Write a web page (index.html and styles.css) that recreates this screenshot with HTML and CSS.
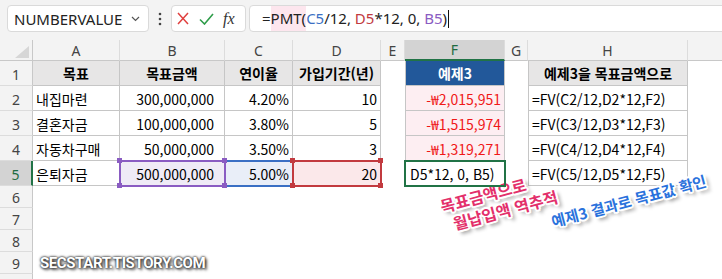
FILE: index.html
```html
<!DOCTYPE html>
<html lang="ko">
<head>
    <meta charset="UTF-8">
    <title>PMT 역추적</title>
    <link rel="stylesheet" href="styles.css">
</head>
<body>
<div class="app">
    <!-- 이름 상자 + 수식 입력줄 -->
    <div class="toolbar">
        <div class="namebox">
            <span>NUMBERVALUE</span>
            <svg width="9" height="6" viewBox="0 0 9 6"><path d="M1 1l3.5 3.5L8 1" fill="none" stroke="#555" stroke-width="1.2"/></svg>
        </div>
        <div class="dots">
            <svg width="4" height="14" viewBox="0 0 4 14"><circle cx="2" cy="2" r="1.3" fill="#444"/><circle cx="2" cy="7" r="1.3" fill="#444"/><circle cx="2" cy="12" r="1.3" fill="#444"/></svg>
        </div>
        <div class="fxbox">
            <svg class="ico-x" width="12" height="13" viewBox="0 0 12 13"><path d="M1 1l10 11M11 1L1 12" stroke="#e0403f" stroke-width="1.5" fill="none"/></svg>
            <svg class="ico-ok" width="15" height="12" viewBox="0 0 15 12"><path d="M1 6.5l4.5 4.5L14 1" stroke="#2f9d4a" stroke-width="1.6" fill="none"/></svg>
            <span class="fx">fx</span>
        </div>
        <div class="formula">=<span class="fn">PMT(</span><span class="t-blue">C5</span>/12, <span class="t-red">D5</span>*12, 0, <span class="t-purple">B5</span>)<span class="caret"></span></div>
    </div>

    <div class="sheet">
        <div class="corner">
            <svg width="14" height="12" viewBox="0 0 14 12"><polygon points="14,0 14,12 0,12" fill="#d6d6d6"/></svg>
        </div>
        <div class="ch">A</div>
        <div class="ch">B</div>
        <div class="ch">C</div>
        <div class="ch">D</div>
        <div class="ch">E</div>
        <div class="ch sel">F</div>
        <div class="ch">G</div>
        <div class="ch">H</div>
        <div class="ch last"></div>

        <div class="rh">1</div>
        <div class="c hd">목표</div>
        <div class="c hd">목표금액</div>
        <div class="c hd">연이율</div>
        <div class="c hd">가입기간(년)</div>
        <div class="blank"></div>
        <div class="c hd f-col f-head">예제3</div>
        <div class="blank"></div>
        <div class="c hd h-col">예제3을 목표금액으로</div>
        <div class="blank"></div>

        <div class="rh">2</div>
        <div class="c">내집마련</div>
        <div class="c num amt">300,000,000</div>
        <div class="c num">4.20%</div>
        <div class="c num">10</div>
        <div class="blank"></div>
        <div class="c num f-col pay">-₩2,015,951</div>
        <div class="blank"></div>
        <div class="c h-col">=FV(C2/12,D2*12,F2)</div>
        <div class="blank"></div>

        <div class="rh">3</div>
        <div class="c">결혼자금</div>
        <div class="c num amt">100,000,000</div>
        <div class="c num">3.80%</div>
        <div class="c num">5</div>
        <div class="blank"></div>
        <div class="c num f-col pay">-₩1,515,974</div>
        <div class="blank"></div>
        <div class="c h-col">=FV(C3/12,D3*12,F3)</div>
        <div class="blank"></div>

        <div class="rh">4</div>
        <div class="c">자동차구매</div>
        <div class="c num amt">50,000,000</div>
        <div class="c num">3.50%</div>
        <div class="c num">3</div>
        <div class="blank"></div>
        <div class="c num f-col pay">-₩1,319,271</div>
        <div class="blank"></div>
        <div class="c h-col">=FV(C4/12,D4*12,F4)</div>
        <div class="blank"></div>

        <div class="rh sel">5</div>
        <div class="c">은퇴자금</div>
        <div class="c num amt ref ref-p">500,000,000<i class="hd-tl"></i><i class="hd-tr"></i><i class="hd-bl"></i><i class="hd-br"></i></div>
        <div class="c num ref ref-b">5.00%</div>
        <div class="c num ref ref-r">20<i class="hd-tl"></i><i class="hd-tr"></i><i class="hd-bl"></i><i class="hd-br"></i></div>
        <div class="blank"></div>
        <div class="c f-col active">D5*12, 0, B5)</div>
        <div class="blank"></div>
        <div class="c h-col">=FV(C5/12,D5*12,F5)</div>
        <div class="blank"></div>

        <div class="rh">6</div><div class="rest"></div>
        <div class="rh">7</div><div class="rest"></div>
        <div class="rh">8</div><div class="rest"></div>
        <div class="rh">9</div><div class="rest"></div>
        <div class="rh"></div><div class="rest"></div>
    </div>

    <!-- 설명 스티커 -->
    <div class="note note-pink">목표금액으로<br><span class="indent">월납입액 역추적</span></div>
    <div class="note note-blue">예제3 결과로 목표값 확인</div>
    <div class="mark">SECSTART.TISTORY.COM</div>
</div>
</body>
</html>
```

FILE: styles.css
```css
body {
    margin: 0;
    font-family: "Noto Sans CJK KR", sans-serif;
}

.app {
    position: relative;
    width: 722px;
    height: 279px;
    overflow: hidden;
    background: #fff;
}

/* 상단 도구줄 */
.toolbar {
    height: 40px;
    box-sizing: border-box;
    padding: 5px 0 0 7px;
    background: #f3f3f3;
    display: flex;
    align-items: flex-start;
}

.namebox {
    width: 142px;
    height: 27px;
    box-sizing: border-box;
    padding: 0 8px 0 6px;
    background: #fff;
    border: 1px solid #dadada;
    border-radius: 4px;
    display: flex;
    align-items: center;
    justify-content: space-between;
    font: 15px "Noto Sans", sans-serif;
    color: #222;
}

.dots {
    width: 22px;
    height: 27px;
    display: flex;
    align-items: center;
    justify-content: center;
}

.fxbox {
    width: 75px;
    height: 27px;
    box-sizing: border-box;
    padding-left: 5px;
    background: #fff;
    border: 1px solid #dadada;
    border-radius: 4px;
    display: flex;
    align-items: center;
}

.ico-ok {
    margin-left: 10px;
}

.fx {
    margin-left: 9px;
    font: italic 16px "Liberation Serif", serif;
    color: #333;
}

.formula {
    flex: 1;
    height: 27px;
    margin-left: 3px;
    margin-right: -10px;
    box-sizing: border-box;
    padding-left: 12px;
    background: #fff;
    border: 1px solid #dadada;
    border-radius: 4px;
    font: 15px/25px "Noto Sans", sans-serif;
    color: #222;
    white-space: nowrap;
}

.fn {
    display: inline-block;
    background: #fde6ee;
}

.t-blue { color: #3a6fc4; }
.t-red { color: #c23a3f; }
.t-purple { color: #8a5cc2; }

.caret {
    display: inline-block;
    width: 1px;
    height: 18px;
    margin-left: 1px;
    vertical-align: -4px;
    background: #111;
}

/* 시트 */
.sheet {
    display: grid;
    grid-template-columns: 33px 87px 105px 68px 88px 24px 100px 23px 160px 1fr;
    grid-template-rows: 21px repeat(5, 25px) repeat(5, 22px);
    font-size: 14px;
}

.corner {
    background: #f3f3f3;
    border-right: 1px solid #c8c8c8;
    border-bottom: 1px solid #c8c8c8;
    display: flex;
    align-items: flex-end;
    justify-content: flex-end;
    padding: 0 3px 2px 0;
}

.ch {
    background: #f3f3f3;
    border-right: 1px solid #dcdcdc;
    border-bottom: 1px solid #c8c8c8;
    display: flex;
    align-items: center;
    justify-content: center;
    font: 14px "Noto Sans", sans-serif;
    color: #444;
}

.ch.last {
    border-right: none;
}

.ch.sel {
    background: #d3d3d3;
    color: #1e6b41;
    border-bottom: 2px solid #217346;
}

.rh {
    background: #f3f3f3;
    border-right: 1px solid #c8c8c8;
    border-bottom: 1px solid #dcdcdc;
    display: flex;
    align-items: center;
    justify-content: center;
    padding-top: 2px;
    font: 14px "Noto Sans", sans-serif;
    color: #444;
}

.rh.sel {
    background: #d3d3d3;
    color: #1e6b41;
    border-right: 2px solid #217346;
}

.c {
    border-right: 1px solid #c6c6c6;
    border-bottom: 1px solid #c6c6c6;
    padding: 2px 3px 0;
    display: flex;
    align-items: center;
    white-space: nowrap;
    overflow: hidden;
    color: #000;
}

.c.hd {
    justify-content: center;
    padding-top: 0;
    background: #e7e6e6;
    font-weight: bold;
}

.c.num {
    justify-content: flex-end;
}

.c.amt {
    padding-right: 10px;
}

.f-col,
.h-col {
    border-left: 1px solid #c6c6c6;
}

.c.f-head {
    background: #22589a;
    color: #fff;
}

.c.pay {
    background: #fdeef2;
    color: #f01818;
}

.c.active {
    position: relative;
    z-index: 3;
    outline: 2px solid #217346;
    outline-offset: -1px;
    padding-left: 4px;
}

/* 수식 참조 범위 */
.ref {
    position: relative;
    overflow: visible;
    outline-offset: -1px;
}

.ref-p {
    z-index: 2;
    background: #efebf6;
    outline: 2px solid #8a5cc2;
}

.ref-b {
    z-index: 1;
    background: #e9eef8;
    outline: 2px solid #3a6fc4;
}

.ref-r {
    z-index: 2;
    background: #fbe8ea;
    outline: 2px solid #c23a3f;
}

.ref i {
    position: absolute;
    width: 5px;
    height: 5px;
}

.ref-p i { background: #8a5cc2; }
.ref-r i { background: #c23a3f; }

.hd-tl { top: -3px; left: -3px; }
.hd-tr { top: -3px; right: -3px; }
.hd-bl { bottom: -3px; left: -3px; }
.hd-br { bottom: -3px; right: -3px; }

.rest {
    grid-column: 2 / -1;
}

/* 스티커 문구 */
.note {
    position: absolute;
    font-weight: bold;
    font-size: 15px;
    line-height: 20px;
    white-space: nowrap;
    transform: rotate(-15deg);
    text-shadow:
        2px 0 0 #fff, -2px 0 0 #fff, 0 2px 0 #fff, 0 -2px 0 #fff,
        1.5px 1.5px 0 #fff, -1.5px 1.5px 0 #fff, 1.5px -1.5px 0 #fff, -1.5px -1.5px 0 #fff,
        3px 4px 4px rgba(0, 0, 0, 0.45);
}

.note-pink {
    left: 441px;
    top: 181px;
    font-size: 16px;
    color: #e3306b;
}

.indent {
    margin-left: 8px;
}

.note-blue {
    left: 549px;
    top: 191px;
    color: #2a72dc;
}

.mark {
    position: absolute;
    left: 40px;
    top: 254px;
    font: bold 15px Roboto, sans-serif;
    letter-spacing: -0.4px;
    color: #fff;
    text-shadow: 0 0 2px #222, 0 0 3px #333, 2px 2px 3px #555;
}
```
